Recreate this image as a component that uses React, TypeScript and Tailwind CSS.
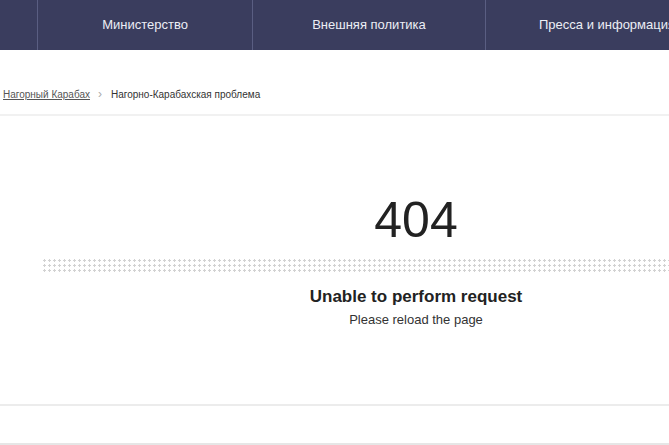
export default function App() {
  return (
    <div className="w-[669px] h-[445px] overflow-hidden bg-white font-['Liberation_Sans',Arial,sans-serif]">
      <nav className="h-[50px] bg-[#3a3d5e] flex text-[13px] text-[#eceef5]">
        <div className="w-[38px] shrink-0 border-r border-[#5a5e82]" />
        <div className="w-[215px] shrink-0 flex items-center justify-center border-r border-[#5a5e82]">
          Министерство
        </div>
        <div className="w-[233px] shrink-0 flex items-center justify-center border-r border-[#5a5e82]">
          Внешняя политика
        </div>
        <div className="w-[242px] shrink-0 flex items-center justify-center whitespace-nowrap">
          Пресса и информация
        </div>
      </nav>

      <div className="h-[66px] flex items-center pl-[3px] pt-[24px] text-[10px] text-[#333] border-b-2 border-[#f1f1f1]">
        <a className="underline text-[#555] underline-offset-1">Нагорный Карабах</a>
        <span className="ml-[8px] mr-[9px] text-[#aaa] text-[12px] leading-none">›</span>
        <span>Нагорно-Карабахская проблема</span>
      </div>

      <div className="h-[290px] border-b-2 border-[#ececec] flex">
        <div className="ml-[42px] w-[748px] shrink-0 flex flex-col items-center">
          <div className="mt-[79px] text-[50px] leading-none text-[#222]">404</div>
          <div className="mt-[13px] self-stretch h-[14px] bg-[radial-gradient(circle,#d2d2d2_1px,transparent_1.3px)] bg-[length:5px_5px]" />
          <h1 className="mt-[12px] text-[17px] font-bold text-[#222]">Unable to perform request</h1>
          <p className="text-[13px] text-[#333]">Please reload the page</p>
        </div>
      </div>

      <div className="h-[39px] border-b-2 border-[#e6e6e6]" />
    </div>
  );
}
